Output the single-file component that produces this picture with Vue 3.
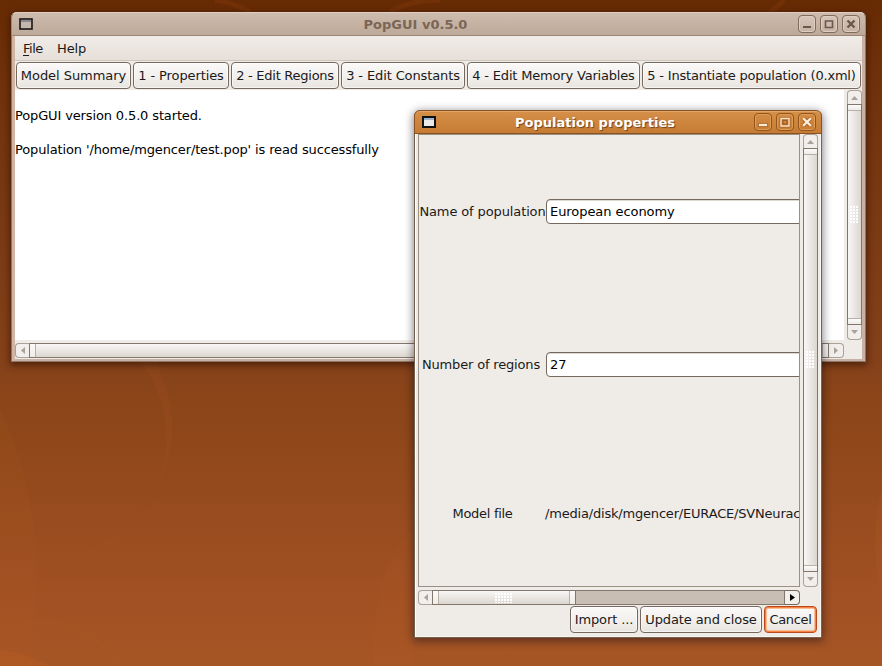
<script setup>
const tools = [
  { label: 'Model Summary', w: 115, ls: -0.05 },
  { label: '1 - Properties', w: 96, ls: -0.1 },
  { label: '2 - Edit Regions', w: 108, ls: -0.26 },
  { label: '3 - Edit Constants', w: 124, ls: -0.12 },
  { label: '4 - Edit Memory Variables', w: 173, ls: -0.18 },
  { label: '5 - Instantiate population (0.xml)', w: 219, ls: -0.2 },
]
const log = ['', 'PopGUI version 0.5.0 started.', '', "Population '/home/mgencer/test.pop' is read successfully"]
const controls = ['min', 'max', 'close']
</script>

<template>
  <div class="desktop">
    <svg class="swirls" width="882" height="666" viewBox="0 0 882 666" fill="none">
      <path d="M155 360Q190 430 155 490Q130 545 70 560Q165 525 166 440Q166 395 140 360Z" fill="#b35a28" fill-opacity=".12" />
      <path d="M0 410Q42 500 36 600Q30 660 35 666H0Z" fill="#b9602b" fill-opacity=".08" />
      <path d="M412 530Q370 570 374 666H414Z" fill="#b9602b" fill-opacity=".08" />
      <path d="M0 650Q30 654 50 666H0Z" fill="#d06a20" fill-opacity=".16" />
      <path d="M0 630Q80 605 120 666" stroke="#b9602b" stroke-opacity=".12" stroke-width="3" />
      <path d="M215 0Q235 3 250 12M390 12Q410 0 440 0M770 12Q780 5 784 0" stroke="#a04812" stroke-opacity=".2" stroke-width="5" />
      <path d="M882 490Q868 540 882 600" fill="#c0662e" fill-opacity=".14" />
    </svg>

    <section class="window main">
      <header class="titlebar">
        <svg class="appicon" width="14" height="12"><rect x="1" y="1" width="12" height="10" fill="#c6b7ac" stroke="#1a1614" stroke-width="1.6" /><path d="M2 3H12" stroke="#8b8894" stroke-width="2" /></svg>
        <h1>PopGUI v0.5.0</h1>
        <div class="controls">
          <button v-for="c in controls" :key="c">
            <svg width="16" height="16" fill="none" stroke="currentColor" stroke-width="2">
              <path v-if="c === 'min'" d="M4 11H12" />
              <path v-else-if="c === 'max'" d="M4.5 5H11.5V11.5H4.5Z" stroke-width="1.6" />
              <path v-else d="M4.5 4.5L11.5 11.5M11.5 4.5L4.5 11.5" stroke-width="2.4" />
            </svg>
          </button>
        </div>
      </header>
      <nav class="menu"><span class="file"><u>F</u>ile</span><span>Help</span></nav>
      <div class="toolbar">
        <button v-for="t in tools" :key="t.label" class="btn" :style="{ width: t.w + 'px', letterSpacing: t.ls + 'px' }">{{ t.label }}</button>
      </div>
      <div class="panes">
        <div class="log"><p v-for="(l, i) in log" :key="i">{{ l }}</p></div>
        <div class="scroll vert">
          <i class="arrow"><svg width="7" height="4"><path d="M0 4L3.5 0L7 4Z" /></svg></i>
          <div class="slider"><i class="cap" /><i class="grip" /><i class="cap" /></div>
          <i class="arrow"><svg width="7" height="4"><path d="M0 0L3.5 4L7 0Z" /></svg></i>
        </div>
        <div class="scroll horiz">
          <i class="arrow"><svg width="4" height="7"><path d="M4 0L0 3.5L4 7Z" /></svg></i>
          <div class="slider"><i class="cap" /><i class="grip" /><i class="cap" /></div>
          <i class="arrow"><svg width="4" height="7"><path d="M0 0L4 3.5L0 7Z" /></svg></i>
        </div>
      </div>
    </section>

    <section class="window dialog">
      <header class="titlebar">
        <svg class="appicon" width="14" height="12"><rect x="1" y="1" width="12" height="10" fill="#e9e9ea" stroke="#111" stroke-width="2" /><path d="M2 3H12" stroke="#9db4cd" stroke-width="2" /></svg>
        <h1>Population properties</h1>
        <div class="controls">
          <button v-for="c in controls" :key="c">
            <svg width="16" height="16" fill="none" stroke="#8a4c17">
              <template v-if="c === 'min'"><rect x="3.5" y="9.5" width="9" height="3" fill="#ffe9cf" stroke-opacity=".6" /></template>
              <template v-else-if="c === 'max'"><path d="M4 4.5H12V12H4Z" stroke-width="3" stroke-opacity=".5" /><path d="M4 4.5H12V12H4Z" stroke="#ffe3c2" stroke-width="1.4" /><path d="M6 6.5H10V10H6Z" stroke-opacity=".7" /></template>
              <template v-else><path d="M4.5 4.5L11.5 11.5M11.5 4.5L4.5 11.5" stroke-width="4" stroke-opacity=".5" /><path d="M4.2 4.2L11.8 11.8M11.8 4.2L4.2 11.8" stroke="#fff0dd" stroke-width="2.2" /></template>
            </svg>
          </button>
        </div>
      </header>
      <div class="panes">
        <div class="viewport">
          <label class="l-name">Name of population</label><div class="entry">European economy</div>
          <label class="l-regions">Number of regions</label><div class="entry">27</div>
          <label class="l-file">Model file</label><div class="path">/media/disk/mgencer/EURACE/SVNeurace</div>
        </div>
        <div class="scroll vert">
          <i class="arrow"><svg width="7" height="4"><path d="M0 4L3.5 0L7 4Z" /></svg></i>
          <div class="slider"><i class="cap" /><i class="grip" /><i class="cap" /></div>
          <i class="arrow"><svg width="7" height="4"><path d="M0 0L3.5 4L7 0Z" /></svg></i>
        </div>
        <div class="scroll horiz">
          <i class="arrow"><svg width="4" height="7"><path d="M4 0L0 3.5L4 7Z" /></svg></i>
          <div class="slider part"><i class="cap" /><i class="grip" /><i class="cap" /></div>
          <div class="trough" />
          <i class="arrow live"><svg width="5" height="7"><path d="M0 0L5 3.5L0 7Z" /></svg></i>
        </div>
      </div>
      <footer>
        <button class="btn import">Import ...</button>
        <button class="btn update">Update and close</button>
        <button class="btn cancel">Cancel</button>
      </footer>
    </section>
  </div>
</template>

<style>
body { margin: 0; overflow: hidden; }
</style>

<style scoped>
* { box-sizing: border-box; }
.desktop {
  position: relative; width: 882px; height: 666px; overflow: hidden;
  font: 13px/17px "DejaVu Sans", sans-serif; color: #1a1a1a;
  background: linear-gradient(#672b04, #71330d 15%, #84411a 54%, #8b4518 60%, #a05023 88%, #a65525);
}
.swirls { display: block; }
button { margin: 0; padding: 0; font: inherit; color: inherit; }
.window { position: absolute; display: flex; flex-direction: column; background: #efebe7; }
.main {
  left: 11px; top: 12px; width: 855px; height: 350px; padding: 0 4px 3px;
  border-radius: 6px 6px 0 0;
  box-shadow: inset 1px 0 #8d7566, inset -1px -1px #8d7566, inset 4px 0 #d0b5a7, inset -4px -3px #c9b2a5, 0 2px 7px 1px rgba(40, 14, 0, .6);
}
.dialog {
  left: 414px; top: 110px; width: 408px; height: 528px; padding: 0 4px;
  border-radius: 6px 6px 0 0;
  box-shadow: inset 1px 0 #70604f, inset -1px -1px #75624f, inset 2px 0 #fff, inset -2px -2px #f8f5f0, 0 2px 8px 1px rgba(20, 12, 25, .5);
}
.titlebar { display: flex; align-items: center; flex: none; height: 24px; margin: 0 -4px; padding: 0 5px 0 7px; border-radius: 6px 6px 0 0; }
.main .titlebar { background: linear-gradient(#cdbbad, #bda999); border: 1px solid #9b8678; border-top-color: #dfcec1; color: #7b6655; }
.dialog .titlebar { background: linear-gradient(#d69049, #c67b33); border: 1px solid #8b5322; color: #fff; box-shadow: inset 0 1px #e0a768; }
h1 { flex: 1; margin: 0; font-size: 13px; font-weight: bold; line-height: 17px; text-align: center; }
.dialog h1 { text-shadow: 1px 1px 1px #74431a; }
.controls { display: flex; gap: 4px; }
.controls button { width: 18px; height: 18px; border: 1px solid #806b5c; border-radius: 4px; background: linear-gradient(#d5c5b9, #c5b2a4); box-shadow: inset 0 0 0 1px #dccec3; color: #6b584a; }
.dialog .controls button { border-color: #925419; background: linear-gradient(#d38b43, #c97d34); box-shadow: inset 0 0 0 1px #dd9c57; }
.controls svg { display: block; }
.menu { display: flex; gap: 15px; flex: none; height: 25px; padding: 4px 8px; background: linear-gradient(#f0ece8, #e7dfd9); border-bottom: 1px solid #cfc6be; letter-spacing: -.15px; }
.menu .file { width: 19px; letter-spacing: -.5px; }
.menu u { text-underline-offset: 2px; }
.toolbar { display: flex; gap: 2px; flex: none; height: 29px; padding: 1px 1px 0; }
.btn { flex: none; height: 27px; border: 1px solid #75695f; border-radius: 4px; background: linear-gradient(#fbfaf9, #f1eeeb 60%, #e9e4df); box-shadow: inset 0 0 0 1px rgba(255, 255, 255, .6); white-space: nowrap; text-align: center; line-height: 25px; }
.panes { display: grid; }
.main .panes { grid-template: 250px 15px / 829px 15px; gap: 3px; }
.log { background: #fff; }
.log p { margin: 0; height: 17px; color: #000; white-space: pre; letter-spacing: -.135px; }
.scroll { display: flex; }
.vert { flex-direction: column; }
.scroll .arrow { display: flex; align-items: center; justify-content: center; flex: none; width: 15px; height: 15px; border: 1px solid #aaa198; background: #f1eeeb; }
.vert .arrow:first-child { border-radius: 4px 4px 0 0; height: 14px; border-bottom: 0; }
.vert .arrow:last-child { border-radius: 0 0 4px 4px; border-top: 0; }
.horiz .arrow:first-child { border-radius: 4px 0 0 4px; width: 14px; border-right: 0; }
.horiz .arrow:last-child { border-radius: 0 4px 4px 0; border-left: 0; }
.arrow svg { fill: #aaa198; }
.scroll .arrow.live { border-color: #75695f; }
.arrow.live svg { fill: #000; }
.slider { display: flex; flex: 1; align-items: center; justify-content: space-between; border: 1px solid #82776c; }
.vert .slider { flex-direction: column; background: linear-gradient(90deg, #dcd6cf, #f8f7f6); }
.main .vert .slider, .dialog .vert .slider { background: linear-gradient(90deg, #f8f7f6, #dcd6cf); }
.horiz .slider { background: linear-gradient(#f8f7f6, #dcd6cf); }
.cap { flex: none; background: linear-gradient(#fcfbfa, #eeebe7); }
.vert .cap { width: 13px; height: 6px; border: solid #b9b1a8; border-width: 0 0 1px; }
.vert .cap:last-child { border-width: 1px 0 0; }
.horiz .cap { width: 6px; height: 13px; border: solid #b9b1a8; border-width: 0 1px 0 0; }
.horiz .cap:last-child { border-width: 0 0 0 1px; }
.grip { width: 18px; height: 10px; background: radial-gradient(circle at 1px 1px, #fff 0 .8px, #cbc3bb 1.1px, transparent 1.5px) 0 0 / 3px 3px; }
.vert .grip { width: 9px; height: 18px; }
.dialog .panes { grid-template: 453px 15px / 382px 15px; gap: 3px; }
.viewport { display: grid; grid-template: 153px 153px 145px / 127px 300px; align-items: center; border: 1px solid #9b9084; overflow: hidden; }
.viewport label { text-align: center; white-space: nowrap; }
.l-name { letter-spacing: -.12px; }
.l-regions { letter-spacing: -.17px; padding-right: 3px; }
.l-file { letter-spacing: -.3px; }
.entry { height: 25px; padding: 0 3px; border: 1px solid #75695f; border-radius: 4px; background: #fff; box-shadow: inset 0 1px #ddd8d2; line-height: 23px; color: #000; letter-spacing: -.06px; }
.path { margin-left: -1px; white-space: nowrap; letter-spacing: -.19px; }
.slider.part { flex: 0 0 144px; }
.trough { flex: 1; border: solid #82776c; border-width: 1px 1px 1px 0; background: #c9beb3; }
footer { display: flex; justify-content: flex-end; gap: 2px; padding: 1px 1px 0 0; }
.import { width: 68px; letter-spacing: -.1px; }
.update { width: 122px; letter-spacing: -.12px; }
.cancel { width: 53px; letter-spacing: -.3px; border-color: #b9481b; box-shadow: inset 0 0 0 1px #f58142, inset 0 0 0 2px #fbbd93; }
</style>
